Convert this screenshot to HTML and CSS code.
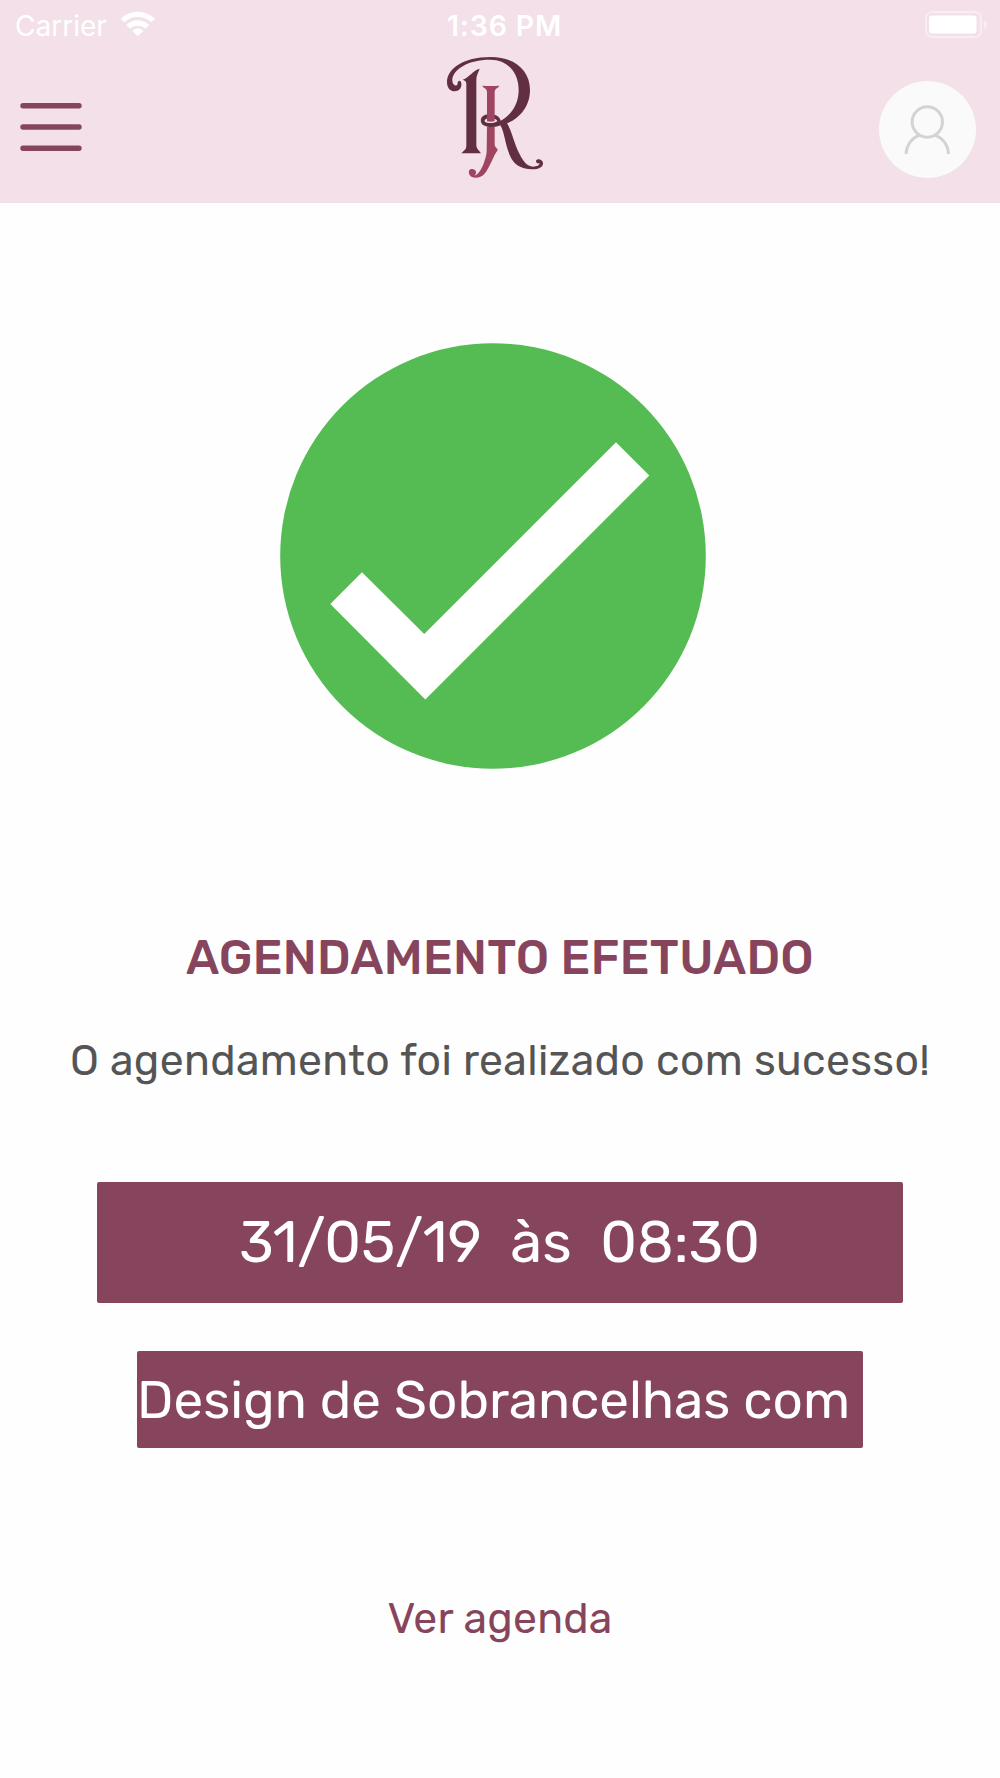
FILE: index.html
```html
<!DOCTYPE html>
<html lang="pt-BR">
<head>
  <meta charset="UTF-8">
  <meta name="viewport" content="width=device-width, initial-scale=1.0">
  <title>Agendamento efetuado</title>
  <link rel="stylesheet" href="styles.css">
</head>
<body>
  <header class="header">
    <div class="status-bar">
      <div class="carrier">
        <span class="carrier-name">Carrier</span>
        <svg class="wifi" viewBox="360 34 108 76">
          <path fill="#fff" d="M362 57Q385 36 413 36T465 57L454 68Q436 52 413 52T373 68ZM379 76Q394 62 413 62T448 76L437 87Q427 78 413 78T390 87ZM397 94Q404 86 413 86T430 94L413 110Z"/>
        </svg>
      </div>
      <span class="time">1:36 PM</span>
      <svg class="battery" viewBox="0 0 66 30">
        <rect x="2" y="2" width="55" height="25" rx="6" fill="none" stroke="#fff" stroke-opacity="0.42" stroke-width="2"/>
        <rect x="5" y="5.5" width="47.5" height="18" rx="3" fill="#fff"/>
        <path d="M60 10Q63 11 63 14.500T60 19Z" fill="#fff" fill-opacity="0.45"/>
      </svg>
    </div>
    <nav class="nav">
      <button class="menu" aria-label="Menu">
        <svg viewBox="0 0 62 48">
          <path d="M3 2.800H59M3 24H59M3 45.200H59"/>
        </svg>
      </button>
      <svg class="logo" viewBox="45 165 300 375">
        <g fill="#612e42">
          <path d="M94 250C96 264 87 274 74 274C59 274 51 262 51 246C51 208 98 171 182 171C253 171 300 211 300 270C300 318 270 355 231 370C245 392 252 430 269 463C279 483 291 500 309 500C322 500 330 495 328 489C324 492 318 489 318 483C319 475 337 475 339 489C340 501 326 508 307 508C270 507 250 492 239 465C224 430 224 397 211 376C198 383 172 384 158 374C146 361 154 344 176 343C198 342 209 350 212 362C245 344 266 312 266 270C266 220 236 180 182 179C118 178 67 207 67 241C67 256 78 261 83 252C81 243 91 237 94 250ZM165 365C174 372 195 370 202 363C199 354 177 352 168 357C164 359 163 363 165 365Z"/>
          <path d="M98 239C119 232 129 210 149 206C145 217 139 226 139 240V435C139 447 147 450 153 460H94C101 451 109 450 109 437V253C109 243 105 242 98 239Z"/>
        </g>
        <path fill="#a04561" d="M157 257Q182 259 208 257C204 266 194 264 194 277V346C184 341 179 342 171 346V277C171 264 161 266 157 257ZM171 380Q184 382 194 379V432C194 443 203 444 203 451C190 466 181 502 163 522C150 537 125 536 119 525C112 510 122 504 130 508C141 511 140 523 133 526C151 527 170 473 170 453Z"/>
        <path fill="#a04561" d="M171 346Q184 341 194 346V363Q184 367 171 364Z"/>
      </svg>
      <div class="profile">
        <svg viewBox="160 312 145 152">
          <circle cx="233" cy="366" r="45.500"/>
          <path d="M169 462C171 435 186 414 208 406M257 406C280 414 295 435 297 462"/>
        </svg>
      </div>
    </nav>
  </header>

  <main class="content">
    <svg class="check" viewBox="0 0 426 426">
      <circle cx="213" cy="213" r="212.800" fill="#55bc53"/>
      <path fill="#fff" d="M50.300 261L82 229.200L144.200 291L336 99.200L369.300 132.500L145.300 356.500Z"/>
    </svg>
    <h1 class="title">AGENDAMENTO EFETUADO</h1>
    <p class="message">O agendamento foi realizado com sucesso!</p>
    <div class="date"><span>31/05/19 &nbsp;às &nbsp;08:30</span></div>
    <div class="service"><span>Design de Sobrancelhas com</span></div>
    <a class="link">Ver agenda</a>
  </main>
</body>
</html>
```
FILE: styles.css
```css
* {
  box-sizing: border-box;
}
body {
  margin: 0;
  background-color: #fefefe;
  font-family: Rubik, Roboto, sans-serif;
}
.header {
  height: 203px;
  background-color: #f3e0e8;
}
.status-bar {
  display: grid;
  grid-template-columns: 1fr auto 1fr;
  align-items: center;
  height: 50px;
  padding: 0 10px 0 15px;
  color: #fff;
  font-family: Inter, sans-serif;
  font-size: 28px;
}
.carrier {
  display: flex;
  align-items: center;
  gap: 13px;
}
.carrier-name {
  padding-top: 1px;
}
.wifi {
  width: 36px;
  height: 25.3px;
  margin-bottom: 2px;
}
.time {
  padding: 0 0 0 4px;
  font-size: 28.500px;
  font-weight: 600;
  letter-spacing: 0.8px;
}
.battery {
  justify-self: end;
  width: 66px;
  height: 30px;
  margin-bottom: 1px;
}
.nav {
  display: grid;
  grid-template-columns: 1fr 100px 1fr;
  padding: 5px 24px 0 20px;
}
.menu {
  width: 62px;
  height: 48px;
  margin-top: 48px;
  padding: 0;
  border: none;
  background: none;
}
.menu svg {
  display: block;
  width: 62px;
  height: 48px;
  fill: none;
  stroke: #87455d;
  stroke-width: 5.4;
  stroke-linecap: round;
}
.logo {
  width: 100px;
  height: 125px;
  margin-left: -3px;
}
.profile {
  display: flex;
  justify-content: center;
  justify-self: end;
  width: 97px;
  height: 97px;
  margin-top: 26px;
  padding-top: 23px;
  border-radius: 50%;
  background-color: #fafafa;
}
.profile svg {
  width: 48.3px;
  height: 50.7px;
  fill: none;
  stroke: #d3d3d3;
  stroke-width: 9;
}
.content {
  display: flex;
  flex-direction: column;
  align-items: center;
  padding-top: 139.500px;
}
.check {
  width: 426px;
  height: 426px;
  margin-right: 14px;
}
.title {
  margin: 159.500px 0 0;
  color: #87455d;
  font-size: 48px;
  font-weight: 500;
  letter-spacing: 0.23px;
  line-height: 60px;
  white-space: nowrap;
}
.message {
  margin: 43px 0 0;
  color: #555;
  font-size: 42.7px;
  letter-spacing: 0.35px;
  line-height: 60px;
  white-space: nowrap;
}
.date, .service {
  display: flex;
  align-items: center;
  border-radius: 2px;
  background-color: #87455d;
  color: #fff;
  white-space: nowrap;
}
.date {
  justify-content: center;
  width: 806px;
  height: 121px;
  margin-top: 91px;
  padding-right: 1px;
  padding-bottom: 1px;
  font-size: 57.9px;
}
.service {
  width: 726px;
  height: 97px;
  margin-top: 48px;
  font-size: 53px;
}
.link {
  margin-top: 141px;
  color: #87455d;
  font-size: 42.7px;
  letter-spacing: 0.2px;
  line-height: 60px;
}
```
